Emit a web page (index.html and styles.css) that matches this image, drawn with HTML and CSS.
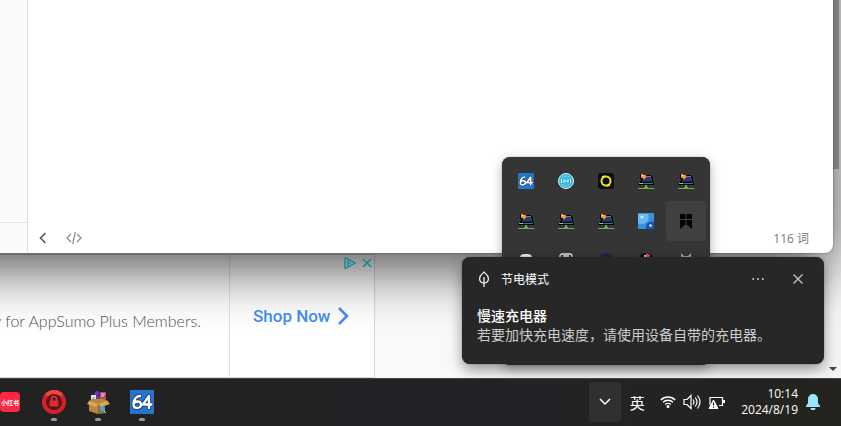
FILE: index.html
```html
<!DOCTYPE html>
<html lang="zh-CN">
<head>
<meta charset="utf-8">
<title>桌面</title>
<link rel="stylesheet" href="styles.css">
</head>
<body>
<svg class="defs" aria-hidden="true">
  <symbol id="host" viewBox="0 0 16 16">
    <path d="M2 1h3v1h8v1h1v1h1v6h1v2H0v-2h2V8h1V6H2z" fill="#08080c"/>
    <path d="M5 4h8v1h1v4H4V6h1z" fill="#35376f"/><path d="M8 3h5v1H8z" fill="#7274b8"/>
    <path d="M4 8h9v1H4z" fill="#20224a"/>
    <path d="M3 1h2v1h3v3H7v1H5V5H3z" fill="#f39a27"/><path d="M4 2h2v1H4z" fill="#ffd06a"/>
    <path d="M1 10h14v1H1z" fill="#2e8066"/><path d="M1 10h4v1H1z" fill="#75c6a2"/>
    <path d="M7 12h2v2H7z" fill="#79a968"/><path d="M0 15h16v1H0zM6 14h4v1H6z" fill="#76ad4e"/>
  </symbol>
  <symbol id="app64" viewBox="0 0 24 24">
    <path d="M0 0h24v24H0z" fill="#2774cf"/>
    <g fill="none" stroke-linejoin="round" stroke-linecap="round">
      <path d="M10 6C6 6 3.500 10 3.500 14c0 2.500 1.500 4 3.500 4s4-1.200 4-3.300-1.500-3.200-3.500-3.200-3.500 1-4 2.500M19 18V6l-6 8.500h8.500" stroke="#16375f" stroke-width="4"/>
      <path d="M10 6C6 6 3.500 10 3.500 14c0 2.500 1.500 4 3.500 4s4-1.200 4-3.300-1.500-3.200-3.500-3.200-3.500 1-4 2.500M19 18V6l-6 8.500h8.500" stroke="#fff" stroke-width="2.400"/>
    </g>
  </symbol>
</svg>
<div class="desktop">
  <main class="page">
    <section class="ad">
      <p class="ad-copy">y for AppSumo Plus Members.</p>
      <a class="shop" href="#">Shop Now
        <svg width="12" height="18" viewBox="0 0 12 18" fill="none" stroke="#468ff0" stroke-width="2.500"><path d="M2 1l8 8-8 8"/></svg>
      </a>
    </section>
    <div class="rail"><i class="thumb"></i><i class="down"></i></div>
  </main>

  <section class="editor" aria-label="编辑器">
    <aside class="side"></aside>
    <footer class="status">
      <button aria-label="返回"><svg width="8" height="12" viewBox="0 0 8 12" fill="none" stroke="#555" stroke-width="1.600"><path d="M6.500 1L1.500 6l5 5"/></svg></button>
      <button aria-label="源代码"><svg width="16" height="12" viewBox="0 0 16 12" fill="none" stroke="#888" stroke-width="1.200"><path d="M5 2L1 6l4 4M11 2l4 4-4 4M9.300 0L6.700 12"/></svg></button>
      <span class="count">116 词</span>
    </footer>
  </section>

  <div class="ad-tools">
    <button aria-label="广告选项"><svg width="12" height="12" viewBox="0 0 12 12" fill="none" stroke="#118796" stroke-width="1.400"><path d="M3 1H1v10h2M4 2v8l7-4z M6 5v2"/></svg></button>
    <button aria-label="关闭广告"><svg width="10" height="10" viewBox="0 0 10 10" fill="none" stroke="#118796" stroke-width="1.500"><path d="M1 1l8 8M9 1L1 9"/></svg></button>
  </div>

  <div class="tray">
    <button aria-label="64"><svg viewBox="0 0 24 24"><use href="#app64"/></svg></button>
    <button aria-label="同步"><svg viewBox="0 0 16 16"><circle cx="8" cy="8" r="7.500" fill="#36b6df" stroke="#d9f5fc"/><path d="M4 5A5 5 0 0 1 12 5M4 11A5 5 0 0 0 12 11" fill="none" stroke="#a9e3f4" stroke-dasharray="2 1"/><path d="M3.500 6v4M12.500 6v4M6 10V7l4 2V6" fill="none" stroke="#e8f9fd"/></svg></button>
    <button aria-label="录音"><svg viewBox="0 0 16 16"><rect width="16" height="16" rx="3" fill="#0d0e11"/><circle cx="8" cy="8" r="4.500" fill="none" stroke="#eee620" stroke-width="2"/><path d="M4 4l3-1M9 13l3-1" stroke="#f5ef39" stroke-width="1.500"/></svg></button>
    <button aria-label="主机 1"><svg viewBox="0 0 16 16"><use href="#host"/></svg></button>
    <button aria-label="主机 2"><svg viewBox="0 0 16 16"><use href="#host"/></svg></button>
    <button aria-label="主机 3"><svg viewBox="0 0 16 16"><use href="#host"/></svg></button>
    <button aria-label="主机 4"><svg viewBox="0 0 16 16"><use href="#host"/></svg></button>
    <button aria-label="主机 5"><svg viewBox="0 0 16 16"><use href="#host"/></svg></button>
    <button aria-label="气泡"><svg viewBox="0 0 16 16"><rect width="16" height="16" rx="1" fill="#3990df"/><path d="M0 1h10a7 7 0 0 1-10 9z" fill="#69b8ef"/><circle cx="4" cy="4" r="1.500" fill="#d5f1ff"/><path d="M16 9v7H8a6 6 0 0 1 8-7" fill="#1559b5"/><circle cx="12.500" cy="12.500" r="1.300" fill="#d5efff"/></svg></button>
    <button class="on" aria-label="书签"><svg viewBox="0 0 16 16" fill="#050505"><path d="M2 1h5.500v5H2zM8.500 1H14v5H8.500zM2 7h5.500v4.500L2 16zM8.500 7H14v9l-5.500-4.500z"/></svg></button>
    <button aria-label="存储"><svg viewBox="0 0 16 16"><rect x="2" y="1" width="12" height="12" rx="4" fill="#e5e5e5"/></svg></button>
    <button aria-label="工具"><svg viewBox="0 0 16 16" fill="none" stroke="#ddd" stroke-width="1.300"><rect x="2" y="1" width="12" height="13" rx="2"/><path d="M5 3h6M8 3v8"/></svg></button>
    <button aria-label="浏览"><svg viewBox="0 0 16 16"><circle cx="8" cy="8" r="8" fill="#18264b"/></svg></button>
    <button aria-label="音乐"><svg viewBox="0 0 16 16"><circle cx="8" cy="8" r="8" fill="#09090b"/><path d="M8 0l4 2-1 4-3-2z" fill="#e9467c"/><path d="M7 2v8" stroke="#fff" stroke-width="1.500"/></svg></button>
    <button aria-label="猫"><svg viewBox="0 0 16 16"><path d="M3 0l3 3h4l3-3v9H3z" fill="#bd9a68"/></svg></button>
  </div>

  <section class="toast" aria-label="通知">
    <header>
      <svg width="14" height="17" viewBox="0 0 14 17" fill="none" stroke="#fff" stroke-width="1.200"><path d="M7 1C5.500 3 2.600 4 2.600 7.500S4.500 12 7 12s4.400-1 4.400-4.500S8.500 3 7 1zM7 6v10"/></svg>
      <span class="app">节电模式</span>
      <button aria-label="更多"><svg width="12" height="4" viewBox="0 0 12 4" fill="#ccc"><circle cx="1.200" cy="2" r="1"/><circle cx="6" cy="2" r="1"/><circle cx="10.800" cy="2" r="1"/></svg></button>
      <button aria-label="关闭"><svg width="10" height="10" viewBox="0 0 10 10" stroke="#ccc" stroke-width="1.200"><path d="M.5.5l9 9M9.500.5l-9 9"/></svg></button>
    </header>
    <h2>慢速充电器</h2>
    <p>若要加快充电速度，请使用设备自带的充电器。</p>
  </section>
</div>

<nav class="taskbar" aria-label="任务栏">
  <div class="apps">
    <button class="red"><span>小红书</span></button>
    <button class="running" aria-label="密码锁"><svg viewBox="0 0 24 24"><circle cx="12" cy="12" r="12" fill="#d91f2a"/><path d="M3 4a12 12 0 0 1 18 0L12 12z" fill="#f0453a"/><circle cx="12" cy="12" r="8" fill="#55151a"/><path d="M9.500 11V9a2.500 2.500 0 0 1 5 0v2" fill="none" stroke="#e83238" stroke-width="1.600"/><rect x="7.500" y="10.500" width="9" height="6" rx="1" fill="#e02831"/></svg></button>
    <button class="running" aria-label="工具箱"><svg viewBox="0 0 24 24"><circle cx="11" cy="3.500" r="2.500" fill="#7e27ce"/><path d="M14 2h6v7h-6z" fill="#b84a56"/><path d="M15 4h4M15 6h3" stroke="#f7d8dc"/><rect x="5" y="5" width="5" height="6" fill="#e3e4ed"/><path d="M6 8h3" stroke="#8a8da5"/><path d="M10 6h4v5h-4z" fill="#60487c"/><path d="M3 11l3-2h13l4 3-4 2v9l-7 1-9-3z" fill="#b9853f"/><path d="M12 14l7 0v9l-7 1z" fill="#9c692c"/><path d="M3 11l9 3-2 3-9-3zM12 14l9-3 3 3-9 3z" fill="#d7a75d"/><circle cx="16.500" cy="19" r="2.500" fill="#32b4dd"/><path d="M18 21l2 2" stroke="#b6e6f5"/></svg></button>
    <button class="running" aria-label="64"><svg viewBox="0 0 24 24"><use href="#app64"/></svg></button>
  </div>
  <div class="system">
    <button class="more" aria-label="显示隐藏的图标"><svg width="12" height="8" viewBox="0 0 12 8" fill="none" stroke="#fff" stroke-width="1.500"><path d="M1 1l5 5 5-5"/></svg></button>
    <button class="ime">英</button>
    <button class="quick" aria-label="网络、音量和电池">
      <svg width="16" height="16" viewBox="0 0 16 16" fill="none" stroke="#fff" stroke-width="1.400"><path d="M.8 6a10.200 10.200 0 0 1 14.400 0M3 8.300a7.100 7.100 0 0 1 10 0M5.200 10.500a4 4 0 0 1 5.600 0"/><circle cx="8" cy="12.500" r=".8" fill="#fff"/></svg>
      <svg width="18" height="16" viewBox="0 0 18 16" fill="none" stroke="#fff" stroke-width="1.200"><path d="M1 5.500h3l4-4v13l-4-4H1zM10 5.500q2 2.500 0 5M12.200 3.500q3.600 4.500 0 9M14.500 1.500q5 6.500 0 13"/></svg>
      <svg width="18" height="16" viewBox="0 0 18 16"><path d="M6 3.500h8.500v8H11M2 11V3.500h5" fill="none" stroke="#fff" stroke-width="1.200"/><path d="M15 6h2v3h-2z" fill="#fff"/><path d="M5.500 6L10 14.500H1z" fill="#fff" stroke="#fff" stroke-linejoin="round"/><path d="M5.500 8.500v3M5.500 12.500v1.200" stroke="#222" stroke-width="1.200"/></svg>
    </button>
    <button class="clock"><span>10:14</span><span>2024/8/19</span></button>
    <button class="bell" aria-label="通知中心"><svg width="14" height="16" viewBox="0 0 14 16" fill="#98e5fc"><path d="M7 0a5 5 0 0 0-5 5v4L0 12v1h14v-1l-2-3V5a5 5 0 0 0-5-5zM4.500 14h5a2.500 2.500 0 0 1-5 0z"/></svg></button>
  </div>
</nav>
</body>
</html>
```
FILE: styles.css
```css
* { box-sizing: border-box; }
body {
  margin: 0;
  height: 100vh;
  display: flex;
  flex-direction: column;
  overflow: hidden;
  font-family: "Open Sans", "Noto Sans CJK SC", sans-serif;
}
button {
  border: 0;
  padding: 0;
  background: none;
  color: inherit;
  font: inherit;
  display: flex;
  align-items: center;
  justify-content: center;
}
p, h2 { margin: 0; font-size: inherit; font-weight: 400; }
svg { display: block; flex: none; }
.defs { position: absolute; width: 0; height: 0; }

.desktop { flex: 1; position: relative; overflow: hidden; }

.page {
  height: 100%;
  display: flex;
  align-items: flex-end;
  justify-content: space-between;
  background: #f9f9f9;
}
.ad {
  width: 375px;
  height: 124px;
  display: grid;
  grid-template-columns: 230px 1fr;
  background: #fff;
  border: 1px solid #d5d5d5;
  border-left: 0;
}
.ad-copy {
  display: flex;
  align-items: center;
  justify-content: flex-end;
  padding: 9px 28px 0 0;
  border-right: 1px solid #e2e2e2;
  color: #555;
  font: 300 16px Lato, sans-serif;
  white-space: nowrap;
}
.shop {
  display: flex;
  align-items: center;
  gap: 6px;
  padding-left: 23px;
  color: #468ff0;
  font: 500 17px Roboto, sans-serif;
  text-decoration: none;
}
.ad-tools {
  position: absolute;
  bottom: 109px;
  left: 344px;
  display: flex;
  align-items: center;
  gap: 6px;
}
.rail {
  align-self: stretch;
  width: 17px;
  display: flex;
  flex-direction: column;
  align-items: center;
  justify-content: space-between;
  background: #f4f4f4;
}
.thumb { width: 13px; height: 169px; background: #b5b5b5; }
.down {
  margin-bottom: 7px;
  border: 4px solid transparent;
  border-top-color: #444;
  border-bottom: 0;
}

.editor {
  position: absolute;
  top: -80px;
  bottom: 125px;
  left: -80px;
  right: 8px;
  padding: 80px 0 0 80px;
  display: grid;
  grid-template-columns: 28px 1fr;
  background: #fff;
  border-radius: 8px;
  box-shadow: 0 0 2px rgba(0, 0, 0, .5), 0 16px 56px rgba(0, 0, 0, .68);
}
.side {
  display: flex;
  flex-direction: column;
  justify-content: flex-end;
  background: #fafafa;
  border-right: 1px solid #e2e2e2;
}
.side::after { content: ""; height: 30px; border-top: 1px solid #e2e2e2; }
.status {
  align-self: end;
  height: 30px;
  display: flex;
  align-items: center;
  gap: 19px;
  padding: 0 24px 0 11px;
  color: #777;
  font-size: 12px;
}
.count { margin-left: auto; }

.tray {
  position: absolute;
  right: 131px;
  bottom: 13px;
  padding: 4px;
  display: grid;
  grid-template: repeat(5, 40px) / repeat(5, 40px);
  background: #353535;
  border-radius: 8px;
  box-shadow: 0 0 1px #555, 0 4px 12px rgba(0, 0, 0, .3);
}
.tray svg { width: 16px; height: 16px; }
.tray .on { background: #404040; border-radius: 4px; }

.toast {
  position: absolute;
  right: 17px;
  bottom: 14px;
  width: 362px;
  height: 107px;
  padding: 4px 15px;
  background: #272727;
  color: #fff;
  border-radius: 8px;
  box-shadow: 0 0 1px #333, 0 6px 14px rgba(0, 0, 0, .4);
  font-size: 14px;
  line-height: 19px;
}
.toast header {
  height: 36px;
  display: flex;
  align-items: center;
  margin-bottom: 9px;
  font-size: 12px;
}
.app { margin: 0 auto 0 10px; }
.toast header button { width: 22px; height: 22px; }
.toast header button + button { margin-left: 18px; }
.toast h2 { font-weight: 500; }
.toast p { color: #ccc; }

.taskbar {
  flex: none;
  height: 48px;
  display: flex;
  justify-content: space-between;
  background: linear-gradient(90deg, #222, #222327 60%, #25231f);
  box-shadow: inset 0 1px #454545;
  color: #fff;
  font-size: 12px;
}
.apps, .system { display: flex; align-items: center; }
.apps { gap: 20px; }
.apps button { position: relative; width: 24px; height: 24px; }
.apps button svg { width: 24px; height: 24px; }
.apps .red {
  width: 20px;
  height: 20px;
  margin-right: 2px;
  background: #fa2845;
  border-radius: 4px;
  font-size: 6px;
  font-weight: 700;
  white-space: nowrap;
}
.running::after {
  content: "";
  position: absolute;
  bottom: -7px;
  left: 9px;
  width: 6px;
  height: 3px;
  border-radius: 2px;
  background: #999;
}
.system { padding-right: 21px; }
.more { width: 32px; height: 40px; border-radius: 4px; background: #303033; }
.ime { width: 32px; height: 40px; font-size: 15px; }
.quick { gap: 7px; padding: 0 7px; }
.clock {
  flex-direction: column;
  align-items: flex-end;
  padding: 0 8px;
  line-height: 16px;
}
```
